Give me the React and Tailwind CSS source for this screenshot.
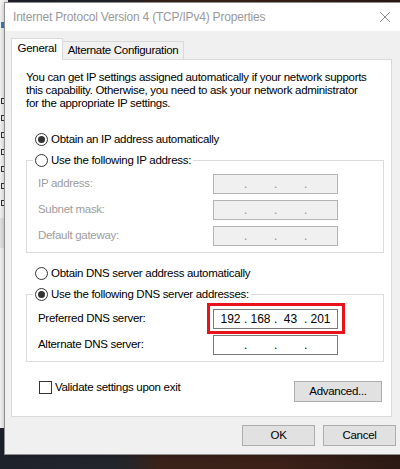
import React from 'react';

const font = "font-['Liberation_Sans',Arial,sans-serif]";

function Radio({ checked }) {
  return (
    <span className="w-[13px] h-[13px] rounded-full border border-[#333333] bg-white flex items-center justify-center shrink-0">
      {checked && <span className="w-[7px] h-[7px] rounded-full bg-[#333333]" />}
    </span>
  );
}

function RadioRow({ checked, label, className = '' }) {
  return (
    <div className={`flex items-center h-[16px] gap-[3px] ${className}`}>
      <Radio checked={checked} />
      <span className="text-black leading-[16px] whitespace-nowrap">{label}</span>
    </div>
  );
}

function IpField({ parts, disabled }) {
  const cells = parts || ['', '', '', ''];
  return (
    <div
      className={`w-[125px] h-[20px] border flex items-center pl-[3px] tracking-normal text-[12px] ${
        disabled ? 'bg-[#f0f0f0] border-[#b4b4b4] text-[#8a8a8a]' : 'bg-white border-[#7a7a7a] text-black'
      }`}
    >
      {cells.map((c, i) => (
        <React.Fragment key={i}>
          {i > 0 && <span className="w-[3px] text-center leading-[18px]">.</span>}
          <span className="w-[27px] text-center leading-[18px]">{c}</span>
        </React.Fragment>
      ))}
    </div>
  );
}

function FieldRow({ label, disabled, parts, children }) {
  return (
    <div className="flex items-center h-[20px] pl-[5px]">
      <span className={`w-[175px] ${disabled ? 'text-[#9d9d9d]' : 'text-black'}`}>{label}</span>
      <div className="relative">
        <IpField parts={parts} disabled={disabled} />
        {children}
      </div>
    </div>
  );
}

function Button({ children, className = '' }) {
  return (
    <button className={`h-[21px] bg-[#e1e1e1] border border-[#adadad] text-black flex items-center justify-center ${className}`}>
      {children}
    </button>
  );
}

export default function App() {
  return (
    <div className={`relative w-[400px] h-[469px] overflow-hidden bg-[linear-gradient(90deg,#1e222b_0%,#23252c_30%,#3a2219_40%,#3b2118_70%,#2c1a14_100%)] text-[11.5px] tracking-[-0.3px] ${font}`}>
      {/* window behind the dialog */}
      <div className="absolute left-0 top-0 w-[8px] h-[428px] bg-[#f7f7f7] flex flex-col">
        <div className="h-[22px]" />
        <div className="w-[4px] h-[6px] bg-[#3b7fc4] ml-[1px]" />
        <div className="flex flex-col gap-[11px] mt-[70px] pl-[1px]">
          {[0, 1, 2, 3, 4, 5, 6].map((i) => (
            <div key={i} className="w-[4px] h-[6px] border-l border-t border-b border-[#333333]" />
          ))}
        </div>
        <div className="mt-[12px] h-[30px] bg-[#e6e6e6]" />
      </div>

      {/* dialog */}
      <div className="absolute left-[4px] top-[2px] w-[400px] h-[453px] border border-[#8f8f8f] bg-[#f0f0f0] flex flex-col shadow-[0_0_6px_rgba(0,0,0,0.3)]">
        <div className="h-[28px] bg-white flex items-center justify-between pl-[8px] pr-[11px] shrink-0">
          <span className="text-[#999999] text-[12px] tracking-[-0.2px] whitespace-nowrap">Internet Protocol Version 4 (TCP/IPv4) Properties</span>
          <svg width="12" height="12" viewBox="0 0 12 12" className="mr-[1px]">
            <path d="M1 1L11 11M11 1L1 11" stroke="#8a8a8a" strokeWidth="1" />
          </svg>
        </div>

        <div className="pt-[7px] pl-[6px]">
          <div className="flex items-end h-[21px]">
            <div className="relative z-10 -mb-px h-[22px] w-[52px] bg-white border border-b-0 border-[#d9d9d9] flex items-center justify-center pb-[1px]">
              General
            </div>
            <div className="h-[18px] w-[121px] bg-[#f0f0f0] border border-l-0 border-b-0 border-[#d9d9d9] flex items-center justify-center whitespace-nowrap">
              Alternate Configuration
            </div>
          </div>

          <div className="w-[381px] h-[358px] bg-white border border-[#d9d9d9] pt-[11px] pl-[14px] flex flex-col">
            <p className="leading-[13px] text-black whitespace-nowrap">
              You can get IP settings assigned automatically if your network supports
              <br />
              this capability. Otherwise, you need to ask your network administrator
              <br />
              for the appropriate IP settings.
            </p>

            <RadioRow checked label="Obtain an IP address automatically" className="mt-[21px] ml-[9px]" />

            <fieldset className="mt-[5px] w-[358px] border border-[#dcdcdc] pl-[6px] pb-[6px]">
              <legend className="px-[2px] h-[16px] flex items-center">
                <RadioRow label="Use the following IP address:" />
              </legend>
              <div className="flex flex-col gap-[6px] pt-[6px]">
                <FieldRow label="IP address:" disabled />
                <FieldRow label="Subnet mask:" disabled />
                <FieldRow label="Default gateway:" disabled />
              </div>
            </fieldset>

            <RadioRow label="Obtain DNS server address automatically" className="mt-[12px] ml-[9px]" />

            <fieldset className="mt-[5px] w-[358px] border border-[#dcdcdc] pl-[6px] pb-[6px]">
              <legend className="px-[2px] h-[16px] flex items-center">
                <RadioRow checked label="Use the following DNS server addresses:" />
              </legend>
              <div className="flex flex-col gap-[6px] pt-[7px]">
                <FieldRow label="Preferred DNS server:" parts={['192', '168', '43', '201']}>
                  <div className="absolute -left-[6px] -right-[7px] -top-[6px] -bottom-[5px] border-[3px] border-[#e8121b] pointer-events-none" />
                </FieldRow>
                <FieldRow label="Alternate DNS server:" />
              </div>
            </fieldset>

            <div className="flex justify-between items-start mt-[19px] w-[356px]">
              <div className="flex items-center gap-[3px] ml-[13px]">
                <span className="w-[13px] h-[13px] border border-[#333333] bg-white" />
                <span className="text-black leading-[13px]">Validate settings upon exit</span>
              </div>
              <Button className="w-[88px]">Advanced...</Button>
            </div>
          </div>
        </div>

        <div className="flex justify-end gap-[8px] w-[391px] mt-[8px]">
          <Button className="w-[73px]">OK</Button>
          <Button className="w-[73px]">Cancel</Button>
        </div>
      </div>
    </div>
  );
}
